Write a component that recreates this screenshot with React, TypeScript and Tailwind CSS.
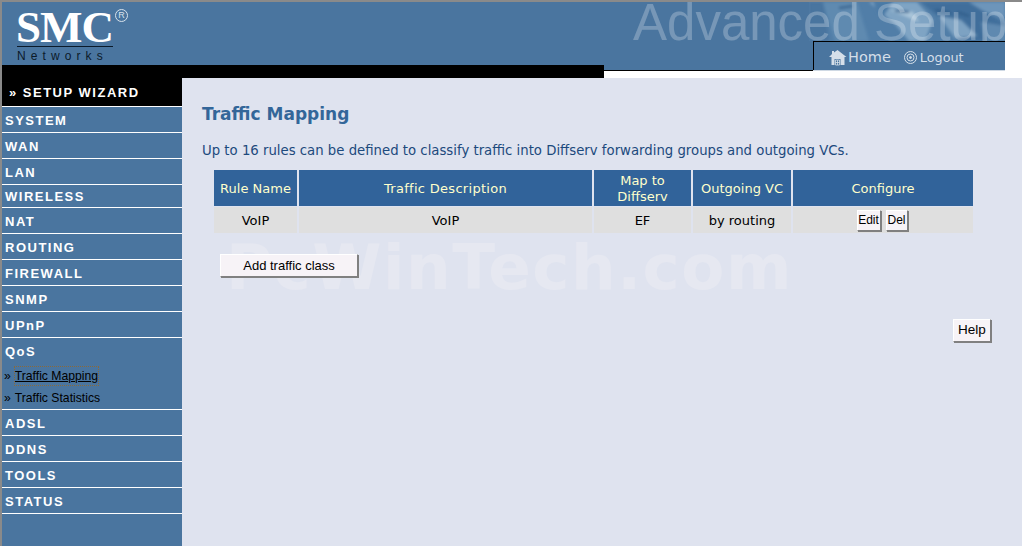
import React from "react";

const sans = "font-['Liberation_Sans',Arial,sans-serif]";
const dv = "font-['DejaVu_Sans',Verdana,sans-serif]";

function Nav({ label, h = "h-[26px]" }: { label: string; h?: string }) {
  return (
    <div className={`${h} border-b border-white pl-[3px] pt-[2px] flex items-center text-white font-bold text-[13px] tracking-[1.5px] ${sans}`}>
      {label}
    </div>
  );
}

function Btn({ children, className = "" }: { children: React.ReactNode; className?: string }) {
  return (
    <button className={`bg-[#f7f3f7] border border-t-white border-l-white border-r-[#808080] border-b-[#808080] shadow-[1px_1px_0_#808080] text-black ${sans} ${className}`}>
      {children}
    </button>
  );
}

function HeaderArt() {
  return (
    <svg className="absolute left-[205px] top-0" width="196" height="39" viewBox="0 0 196 39">
      <defs>
        <filter id="b" x="-10%" y="-10%" width="120%" height="120%">
          <feGaussianBlur stdDeviation="1.4" />
        </filter>
      </defs>
      <rect width="196" height="39" fill="#517ea8" />
      <g filter="url(#b)">
        <path d="M0 0 L14 0 L20 39 L0 39Z" fill="#4a759f" />
        <path d="M14 0 L48 0 L60 39 L26 39Z" fill="#5f8ab0" />
        <path d="M60 0 L108 0 L124 18 L116 39 L100 39 L86 22Z" fill="#7fa4c4" />
        <path d="M80 8 L104 10 L110 20 L96 14Z" fill="#a9c4d9" />
        <path d="M112 0 L160 0 L196 22 L196 39 L150 39 L138 22Z" fill="#3f6e9b" />
        <path d="M130 14 L152 18 L168 34 L146 36Z" fill="#7da2c2" />
        <path d="M160 0 L196 0 L196 16 L176 10Z" fill="#6d95ba" />
        <path d="M64 0 L84 0 L72 18Z" fill="#4c7aa6" />
        <path d="M172 20 L196 24 L196 39 L176 39Z" fill="#5f89b0" />
        <path d="M86 9 L100 10 M126 8 L142 11 M148 10 L160 14 M30 6 L44 4" stroke="#2f5c88" strokeWidth="2" />
      </g>
    </svg>
  );
}

export default function App() {
  return (
    <div className="w-[1022px] h-[546px] overflow-hidden bg-[#dfe3ef] flex flex-col border-l-2 border-[#8a8a8a]">
      {/* header */}
      <div className="h-[78px] flex shrink-0 bg-white border-t-2 border-[#8a8a8a]">
        <div className="w-[602px] flex flex-col">
          <div className="h-[63px] bg-[#4a759f] pl-[15px]">
            <div className="relative w-[112px] h-[63px]">
              <div className="font-['Liberation_Serif',serif] font-bold text-white text-[45px] leading-[44px] tracking-[-1px] -ml-[1px] mt-[3px] absolute top-0 left-0">SMC</div>
              <div className={`absolute left-[98px] top-[7px] w-[13px] h-[13px] rounded-full border border-[#d9e3ec] text-[#d9e3ec] text-[9px] leading-[11px] text-center ${sans}`}>R</div>
              <div className="absolute left-0 top-[44px] w-[96px] h-px bg-[#0b1a2a]"></div>
              <div className={`absolute left-0 top-[47px] text-[12px] leading-[14px] tracking-[5.1px] text-[#0b1a2a] ${sans}`}>Networks</div>
            </div>
          </div>
          <div className="h-[13px] bg-black"></div>
        </div>
        <div className="w-[401px] flex flex-col">
          <div className="h-[68px] bg-[#4a759f] relative overflow-hidden">
            <HeaderArt />
            <div className={`absolute left-[29px] top-[-7px] text-white/25 text-[51px] leading-[56px] whitespace-nowrap ${sans}`}>Advanced Setup</div>
            <div className={`absolute left-[209px] top-[39px] w-[192px] h-[29px] bg-[#4a759f] border-l border-t border-black flex items-center pl-[15px] pt-[3px] text-[#d5dfe9]`}>
              <svg width="18" height="16" viewBox="0 0 18 16" fill="#d5dfe9">
                <path d="M8.5 0 L17.5 7 L15.5 7 L15.5 15 L11.5 15 L11.5 9 L5.5 9 L5.5 15 L2.5 15 L2.5 7 L0 7 L3 4 L3 1 L5 1 L5 2.5Z" />
                <path d="M6.5 10 H10.5 V15 H6.5Z M8.5 10 V15 M6.5 12.5 H10.5" fill="none" stroke="#d5dfe9" strokeWidth="0.8" />
              </svg>
              <span className={`text-[14.5px] ml-[1px] ${dv}`}>Home</span>
              <svg className="ml-[13px]" width="13" height="13" viewBox="0 0 13 13" fill="none" stroke="#d5dfe9">
                <circle cx="6.5" cy="6.5" r="6" />
                <circle cx="6.5" cy="6.5" r="3.5" />
                <circle cx="6.5" cy="6.5" r="1" fill="#d5dfe9" />
              </svg>
              <span className={`text-[12.8px] ml-[3px] ${dv}`}>Logout</span>
            </div>
          </div>
          <div className="h-px flex">
            <div className="w-[209px] bg-black"></div>
            <div className="w-[192px] bg-[#cfd9e4]"></div>
          </div>
        </div>
        <div className="flex-1 bg-white"></div>
      </div>

      {/* body */}
      <div className="flex flex-1 min-h-0">
        <aside className="w-[180px] shrink-0 bg-[#4a759f] flex flex-col">
          <div className={`h-[29px] bg-black border-b border-white pt-[2px] text-white font-bold text-[13px] tracking-[1.5px] pl-[7px] ${sans} flex items-center`}>» SETUP WIZARD</div>
          <Nav label="SYSTEM" />
          <Nav label="WAN" />
          <Nav label="LAN" />
          <Nav label="WIRELESS" h="h-[23px]" />
          <Nav label="NAT" />
          <Nav label="ROUTING" />
          <Nav label="FIREWALL" />
          <Nav label="SNMP" />
          <Nav label="UPnP" />
          <div className={`h-[26px] pl-[3px] pt-[2px] flex items-center text-white font-bold text-[13px] tracking-[1.5px] ${sans}`}>QoS</div>
          <div className={`text-[12.2px] text-black pl-[2px] h-[24px] flex items-center ${sans}`}>
            <span>»</span>
            <span className="ml-[4px] underline outline-1 outline-dotted outline-[#8a6a3a]">Traffic Mapping</span>
          </div>
          <div className={`text-[12.2px] text-black pl-[2px] h-[22px] border-b border-white flex items-center ${sans}`}>
            <span>»</span>
            <span className="ml-[4px]">Traffic Statistics</span>
          </div>
          <Nav label="ADSL" />
          <Nav label="DDNS" />
          <Nav label="TOOLS" />
          <Nav label="STATUS" />
        </aside>

        <main className="relative flex-1 pl-[20px] pt-[25px] flex flex-col">
          <div className={`absolute left-[44px] top-[152px] text-[#e6e8f1] font-bold text-[62.8px] leading-[76px] tracking-[1.5px] whitespace-nowrap ${dv}`}>PcWinTech.com</div>
          <h1 className={`relative text-[#336699] font-bold text-[17px] leading-[22px] ${dv}`}>Traffic Mapping</h1>
          <p className={`relative text-[#1d4a7d] text-[13.28px] leading-[16px] mt-[18px] whitespace-nowrap ${dv}`}>
            Up to 16 rules can be defined to classify traffic into Diffserv forwarding groups and outgoing VCs.
          </p>
          <div className={`relative ml-[12px] mt-[11px] w-[759px] grid grid-cols-[83px_293px_97px_98px_180px] gap-x-[2px] gap-y-[1px] text-[13px] text-center ${dv}`}>
            {["Rule Name", "Traffic Description", "Map to Diffserv", "Outgoing VC", "Configure"].map((h) => (
              <div key={h} className={`h-[36px] bg-[#31639a] text-[#ffffcc] leading-[16px] pt-[1px] flex items-center justify-center ${h === "Traffic Description" ? "tracking-[0.3px]" : ""}`}>{h}</div>
            ))}
            {["VoIP", "VoIP", "EF", "by routing"].map((c, i) => (
              <div key={i} className="h-[26px] bg-[#dfdfdf] text-black pt-[1px] flex items-center justify-center">{c}</div>
            ))}
            <div className="h-[26px] bg-[#dfdfdf] flex items-center justify-center gap-[5px] pr-[2px]">
              <Btn className="w-[24px] h-[21px] text-[12px] leading-none px-0">Edit</Btn>
              <Btn className="w-[22px] h-[21px] text-[12px] leading-none px-0">Del</Btn>
            </div>
          </div>
          <Btn className="relative ml-[18px] mt-[21px] w-[138px] h-[23px] text-[13px] self-start">Add traffic class</Btn>
          <Btn className="relative self-end mr-[31px] mt-[42px] w-[38px] h-[23px] text-[13.5px]">Help</Btn>
        </main>
      </div>
    </div>
  );
}
